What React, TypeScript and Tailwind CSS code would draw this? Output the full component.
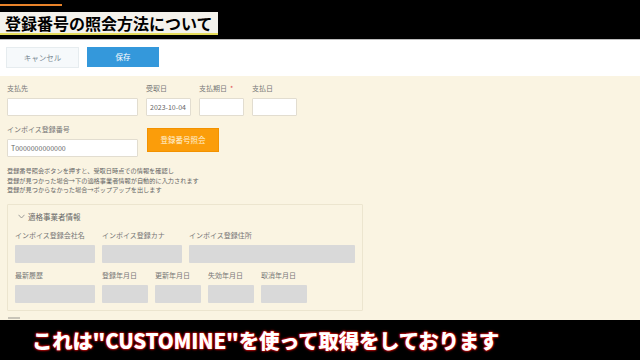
import React from 'react';

const jp = { fontFamily: '"Noto Sans CJK JP", "Noto Sans", sans-serif' };

function Field({ label, width, value, required }: { label: string; width: string; value?: string; required?: boolean }) {
  return (
    <div className="flex flex-col">
      <div className="text-[7px] leading-[9px] text-[#777] h-[9px] whitespace-nowrap">
        {label}
        {required && <span className="text-[#e05050] ml-[3px]">*</span>}
      </div>
      <div className={`${width} h-[18px] mt-[5px] bg-white border border-[#e2ddd0] rounded-[1px] flex items-center px-[3px] text-[7px] text-[#666] whitespace-nowrap overflow-hidden`}>
        {value}
      </div>
    </div>
  );
}

function GreyField({ label, width }: { label: string; width: string }) {
  return (
    <div className="flex flex-col">
      <div className="text-[7px] leading-[9px] h-[9px] text-[#777] whitespace-nowrap">{label}</div>
      <div className={`${width} h-[18px] mt-[5px] bg-[#d9d9d9] rounded-[1px]`} />
    </div>
  );
}

export default function App() {
  return (
    <div className="w-[640px] h-[360px] overflow-hidden flex flex-col bg-white" style={jp}>
      {/* title bar */}
      <div className="h-[39px] bg-black relative shrink-0">
        <div className="absolute left-0 top-[4px] w-[62px] h-[2px] bg-[#e8832a]" />
        <div className="absolute left-0 top-[12px] w-[218px] h-[21px] bg-[#f4f2ec] flex items-center pl-[5px]">
          <span className="text-[16px] font-bold text-black leading-none">登録番号の照会方法について</span>
        </div>
        <div className="absolute left-0 top-[33px] w-[218px] h-[2px] bg-[#e6dc5a]" />
      </div>
      <div className="h-px bg-[#bdbdbd] shrink-0" />

      {/* toolbar */}
      <div className="h-[36px] shrink-0 flex items-start gap-[8px] pl-[6px] pt-[7px]">
        <div className="w-[73px] h-[21px] bg-[#f6f9fb] border border-[#e6ecef] flex items-center justify-center text-[7.5px] text-[#7a8a94]">
          キャンセル
        </div>
        <div className="w-[72px] h-[20px] bg-[#3498db] flex items-center justify-center text-[7.5px] text-white">
          保存
        </div>
      </div>

      {/* form */}
      <div className="h-[244px] shrink-0 bg-[#faf4e2] pl-[7px] pt-[8px] flex flex-col">
        <div className="flex gap-[8px]">
          <Field label="支払先" width="w-[131px]" />
          <Field label="受取日" width="w-[45px]" value="2023-10-04" />
          <Field label="支払期日" width="w-[45px]" required />
          <Field label="支払日" width="w-[45px]" />
        </div>

        <div className="flex gap-[9px] mt-[9px] items-start">
          <Field label="インボイス登録番号" width="w-[131px]" value="T0000000000000" />
          <div className="w-[72px] h-[24px] mt-[3px] bg-[#fb9d0a] border border-[#f39200] flex items-center justify-center text-[7.5px] text-[#fff3dc]">
            登録番号照会
          </div>
        </div>

        <div className="mt-[9px] text-[6.2px] leading-[9.5px] text-[#666]">
          <div>登録番号照会ボタンを押すと、受取日時点での情報を確認し</div>
          <div>登録が見つかった場合→下の適格事業者情報が自動的に入力されます</div>
          <div>登録が見つからなかった場合→ポップアップを出します</div>
        </div>

        <div className="mt-[9px] w-[356px] h-[107px] border border-[#ece5cf] rounded-[1px] px-[7px] pt-[7px]">
          <div className="flex items-center gap-[3px] pl-[3px] text-[7.5px] text-[#666] leading-[10px]">
            <svg width="7" height="5" viewBox="0 0 7 5" fill="none" stroke="#888" strokeWidth="0.8">
              <path d="M0.5 0.8 L3.5 4 L6.5 0.8" />
            </svg>
            <span>適格事業者情報</span>
          </div>
          <div className="flex gap-[7px] mt-[9px]">
            <GreyField label="インボイス登録会社名" width="w-[80px]" />
            <GreyField label="インボイス登録カナ" width="w-[80px]" />
            <GreyField label="インボイス登録住所" width="w-[166px]" />
          </div>
          <div className="flex gap-[7px] mt-[8px]">
            <GreyField label="最新履歴" width="w-[80px]" />
            <GreyField label="登録年月日" width="w-[46px]" />
            <GreyField label="更新年月日" width="w-[46px]" />
            <GreyField label="失効年月日" width="w-[46px]" />
            <GreyField label="取消年月日" width="w-[46px]" />
          </div>
        </div>
        <div className="mt-[6px] ml-[1px] w-[12px] h-[2px] bg-[#c8c4b8]" />
      </div>

      {/* caption */}
      <div className="h-[40px] shrink-0 bg-black flex items-center pl-[32px]">
        <span className="text-[20.5px] font-black text-white leading-none tracking-[-0.3px] [text-shadow:0_0_2px_#e01010,0_0_2px_#e01010,0_0_3px_#c00000]">
          これは"CUSTOMINE"を使って取得をしております
        </span>
      </div>
    </div>
  );
}
